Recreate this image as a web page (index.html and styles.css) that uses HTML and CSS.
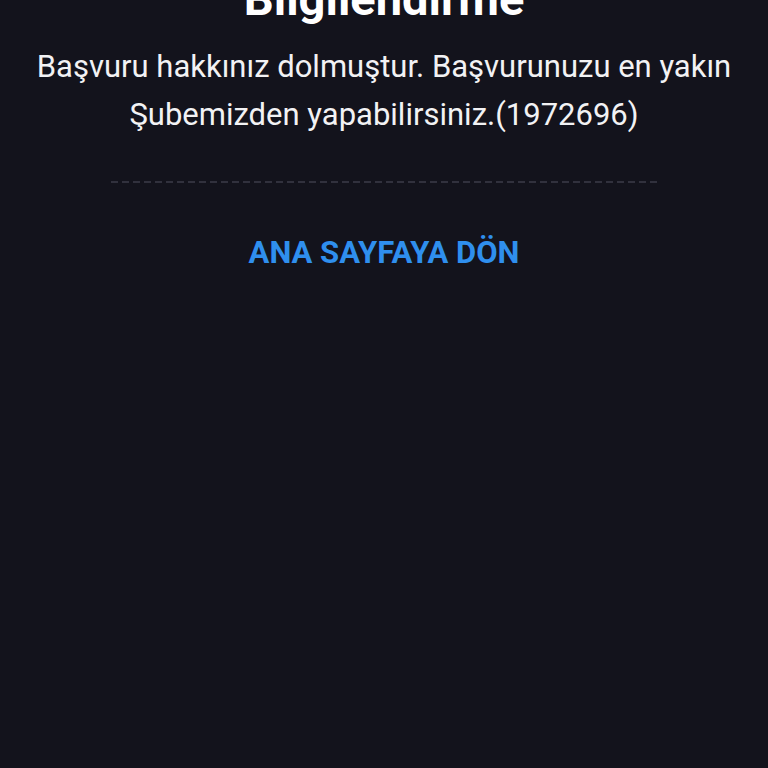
FILE: index.html
```html
<!DOCTYPE html>
<html lang="tr">
<head>
  <meta charset="UTF-8">
  <title>Bilgilendirme</title>
  <link rel="stylesheet" href="styles.css">
</head>
<body>
  <div class="sheet">
    <h1 class="title">Bilgilendirme</h1>
    <p class="message">Başvuru hakkınız dolmuştur. Başvurunuzu en yakın Şubemizden yapabilirsiniz.(1972696)</p>
    <div class="divider"></div>
    <a class="home-link" href="#">ANA SAYFAYA DÖN</a>
  </div>
</body>
</html>
```

FILE: styles.css
```css
html, body {
  margin: 0;
  height: 100%;
  background: #13131c;
  overflow: hidden;
}
body {
  font-family: Roboto, "Noto Sans", sans-serif;
  color: #f2f2f4;
}
.sheet {
  display: flex;
  flex-direction: column;
  align-items: center;
  margin-top: -29px;
  padding: 0 20px;
}
.title {
  margin: 0;
  font-size: 47px;
  font-weight: 700;
  line-height: 55px;
  color: #ffffff;
}
.message {
  margin: 0;
  margin-top: 17px;
  font-size: 31px;
  line-height: 48px;
  text-align: center;
}
.divider {
  width: 547px;
  height: 2px;
  margin-top: 42px;
  background: repeating-linear-gradient(to right, #31313d 0 7px, transparent 7px 11px);
}
.home-link {
  margin-top: 52px;
  font-size: 31px;
  line-height: 36px;
  font-weight: 700;
  color: #2f8fee;
  text-decoration: none;
}
```
